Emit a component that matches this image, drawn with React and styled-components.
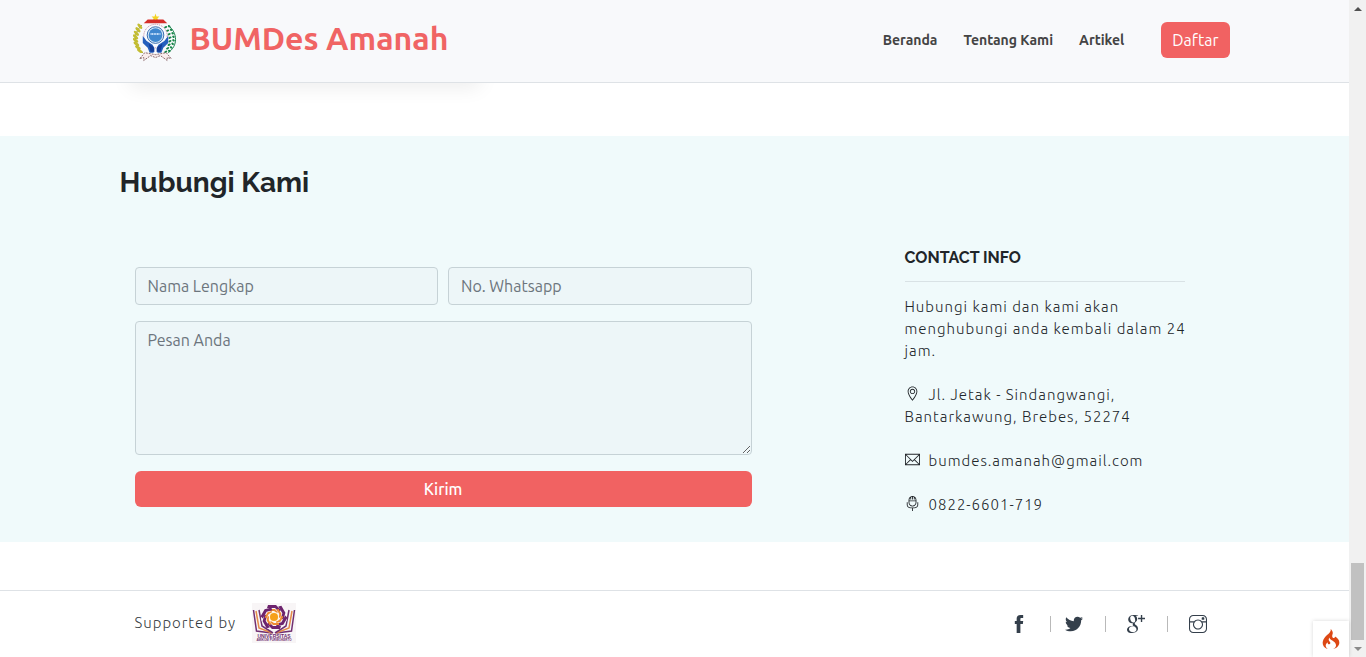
import React from "react";
import styled, { createGlobalStyle } from "styled-components";
import { TfiLocationPin, TfiEmail, TfiMicrophone, TfiFacebook, TfiTwitterAlt, TfiGoogle, TfiInstagram } from "react-icons/tfi";
import { SiCodeigniter } from "react-icons/si";

const GlobalStyle = createGlobalStyle`
  *, *::before, *::after { box-sizing: border-box; }
  body {
    margin: 0;
    background: #fff;
    color: #212529;
    font-family: Ubuntu, "Noto Sans", "Open Sans", sans-serif;
    font-size: 16px;
    line-height: 24px;
  }
`;

const Shell = styled.div`
  display: grid;
  grid-template-columns: minmax(0, 1fr) 17px;
  min-height: 100vh;
`;

const Page = styled.div`
  display: flex;
  flex-direction: column;
  position: relative;
`;

const Container = styled.div`
  width: 100%;
  max-width: 1140px;
  margin: 0 auto;
  padding: 0 15px;
`;

const Header = styled.header`
  position: relative;
  z-index: 1;
  background: #f8f9fb;
  border-bottom: 1px solid #dee2e6;
`;

const HeaderRow = styled(Container)`
  display: flex;
  align-items: center;
  justify-content: space-between;
  min-height: 82px;
  padding-bottom: 2px;
`;

const Brand = styled.a`
  display: flex;
  align-items: center;
  gap: 12px;
  padding: 0 0 4px 13px;
  color: #f06464;
  font-size: 32px;
  font-weight: 700;
  line-height: 50px;
  text-decoration: none;
`;

const Nav = styled.nav`
  display: flex;
  align-items: center;
  gap: 26px;
`;

const NavLink = styled.a`
  color: #444;
  font-size: 14px;
  font-weight: 700;
  text-decoration: none;
`;

const Button = styled.button`
  height: 36px;
  padding: 0 11px;
  border: 0;
  border-radius: 6px;
  background: #f16262;
  color: #fff;
  font-family: inherit;
  font-size: 16px;
  font-weight: ${(p) => (p.$strong ? 500 : 400)};
  width: ${(p) => (p.$block ? "100%" : "auto")};
  margin-left: ${(p) => (p.$block ? "0" : "11px")};
  cursor: pointer;
`;

const CardFoot = styled.div`
  height: 53px;

  &::before {
    content: "";
    position: absolute;
    top: 60px;
    width: 350px;
    height: 20px;
    margin-left: 10px;
    box-shadow: 0 7px 20px rgba(0, 0, 0, 0.08);
  }
`;

const Contact = styled.section`
  background: #f0fafb;
  padding: 29px 0 26px;
`;

const Title = styled.h2`
  margin: 0;
  font-family: Raleway, Lato, sans-serif;
  font-size: 28px;
  font-weight: 700;
  line-height: 36px;
`;

const Columns = styled.div`
  display: flex;
  justify-content: space-between;
  align-items: flex-start;
  padding: 46px 45px 0 15px;
`;

const Form = styled.form`
  display: grid;
  grid-template-columns: 1fr 1fr;
  gap: 16px 10px;
  flex: 0 1 617px;
  padding-top: 20px;
`;

const Field = styled.input`
  grid-column: ${(p) => (p.$wide ? "1 / -1" : "auto")};
  display: block;
  width: 100%;
  min-width: 0;
  padding: 6px 12px;
  border: 1px solid #c6d2d6;
  border-radius: 4px;
  background: #edf6f8;
  color: #495057;
  font-family: inherit;
  font-size: 16px;
  line-height: 24px;

  &::placeholder { color: #6c757d; opacity: 1; }
`;

const FullRow = styled.div`
  grid-column: 1 / -1;
`;

const Info = styled.aside`
  flex: 0 0 280px;
  font-size: 15px;
  font-weight: 300;
  letter-spacing: 1px;
  line-height: 22px;
  color: #212529;

  p { margin: 0 -8px 22px 0; }
  p:last-child { margin-bottom: 0; }
`;

const InfoTitle = styled.h3`
  margin: 0 0 14px;
  padding-bottom: 12px;
  border-bottom: 1px solid #d9e2e5;
  color: #212529;
  font-family: Raleway, Lato, sans-serif;
  font-size: 16px;
  font-weight: 700;
  letter-spacing: 0;
  line-height: 22px;
`;

const InfoIcon = styled.span`
  display: inline-block;
  width: 24px;
  svg { display: inline-block; width: 15px; height: 15px; vertical-align: -1px; }
`;

const PlainLink = styled.a`
  color: inherit;
  text-decoration: none;
`;

const Footer = styled.footer`
  margin-top: 48px;
  border-top: 1px solid #dee2e6;
`;

const FooterRow = styled(Container)`
  display: flex;
  justify-content: space-between;
  align-items: center;
  min-height: 66px;
`;

const Support = styled.div`
  display: flex;
  align-items: center;
  gap: 16px;
  padding: 0 0 2px 15px;
  font-size: 15px;
  font-weight: 300;
  letter-spacing: 1px;
  color: #343a40;
`;

const Social = styled.div`
  display: flex;
  align-items: center;
  padding-right: 1px;
`;

const SocialLink = styled.a`
  display: flex;
  align-items: center;
  height: 16px;
  padding: 0 22px 0 ${(p) => (p.$tight ? "14px" : "21px")};
  border-right: 1px solid #b9b9b9;
  color: #343f4b;

  &:last-child { border-right: 0; }
  svg { width: 18px; height: 18px; }
`;

const DebugBadge = styled.button`
  position: absolute;
  right: 0;
  bottom: 0;
  display: flex;
  align-items: center;
  justify-content: center;
  width: 36px;
  height: 36px;
  padding: 0;
  border: 0;
  background: #fff;
  box-shadow: 0 0 4px rgba(0, 0, 0, 0.16);
  color: #dd4814;
`;

const Scrollbar = styled.div`
  display: flex;
  flex-direction: column;
  align-items: center;
  justify-content: space-between;
  background: #f1f1f1;
`;

const Arrow = styled.span`
  width: 0;
  height: 0;
  margin: 7px 0 6px;
  border: 4px solid transparent;
  border-top-width: ${(p) => (p.$up ? "0" : "4px")};
  border-bottom-width: ${(p) => (p.$up ? "4px" : "0")};
  border-top-color: ${(p) => (p.$up ? "transparent" : "#8a8a8a")};
  border-bottom-color: ${(p) => (p.$up ? "#505050" : "transparent")};
`;

const Thumb = styled.span`
  width: 13px;
  height: 77px;
  margin-top: auto;
  background: #c1c1c1;
`;

const leaves = [0, 1, 2, 3, 4, 5, 6, 7];

function VillageLogo() {
  return (
    <svg width="45" height="50" viewBox="0 0 46 50" role="img" aria-label="Logo BUMDes Amanah">
      <path d="M23 0l1 3h3l-2 2 1 3-3-2-3 2 1-3-2-2h3z" fill="#f3d321" />
      <path d="M11 10l4-4h16l4 4z" fill="#d52e2a" />
      <path d="M9 12C0 20 0 33 10 40" fill="none" stroke="#777b23" strokeWidth="1" />
      <path d="M36 12c10 8 10 21 0 28" fill="none" stroke="#17804b" strokeWidth="1" />
      {leaves.map((i) => {
        const y = 13 + i * 3.6;
        const x = 7 - Math.sin((i / 7) * Math.PI) * 4.5;
        return (
          <g key={i}>
            <ellipse cx={x} cy={y} rx="3.3" ry="1.5" fill="#c3bd32" transform={`rotate(${50 - i * 3} ${x} ${y})`} />
            <ellipse cx={44 - x} cy={y} rx="1.4" ry="1.1" fill="#168447" transform={`rotate(35 ${44 - x} ${y})`} />
            <ellipse cx={40 - x} cy={y + 1} rx="1.7" ry="1" fill="#168447" transform={`rotate(-25 ${40 - x} ${y})`} />
          </g>
        );
      })}
      <circle cx="23" cy="23" r="12" fill="#f9fbff" stroke="#b97d98" strokeWidth="1" strokeDasharray="1 1" />
      <circle cx="23" cy="22" r="8.5" fill="#d9eaf7" stroke="#3669ad" strokeWidth="1" />
      <circle cx="23" cy="22" r="7" fill="#3f87cf" />
      <path d="M18 21h10" stroke="#d8eaff" strokeWidth="2" strokeDasharray="1 .6" />
      <path d="M10 23l4 5 6 4 2 4-1 4h-4l-2-5-5-5zM36 23l-4 5-6 4-2 4 1 4h4l2-5 5-5z" fill="#255fbd" />
      <path d="M16 31l5 3 1 5h-4zM30 31l-5 3-1 5h4z" fill="#153d96" />
      <path d="M7 46l5-6 11 2 11-2 5 6-4-1v3l-7-5-5 2-5-2-7 5v-3z" fill="#f9edee" stroke="#80595c" strokeWidth=".9" strokeDasharray="2 1" />
    </svg>
  );
}

function UniversityLogo() {
  return (
    <svg width="44" height="40" viewBox="0 0 44 40" role="img" aria-label="Universitas Amikom Purwokerto">
      <path fill="#f8f5f6" d="M0 0h44v40H0z" />
      <g fill="none" strokeWidth="1.5">
        <path d="M1.500 7l3 21 15 2M42.500 7l-3 21-15 2" stroke="#713072" />
        <path d="M4 8l3 17 13 5M40 8l-3 17-13 5" stroke="#e58b49" />
        <path d="M7 7l3 16 11 7M37 7l-3 16-11 7" stroke="#713072" />
      </g>
      <circle cx="22" cy="14" r="13" fill="#faf8f8" />
      {[0, 60, 120, 180, 240, 300].map((r) => (
        <g key={r} transform={`rotate(${r} 22 14)`}>
          <path d="M16 2h8l5 5-2 2-4-4h-8z" fill="#6d246e" />
          <path d="M17 6h6l3 3-1 1-3-2h-5z" fill="#ee8b32" />
        </g>
      ))}
      <circle cx="22" cy="14" r="5" fill="#fff3df" />
      <circle cx="22" cy="14" r="4" fill="#f6a01b" />
      <g fill="#713072" fontFamily="Liberation Sans, sans-serif" fontWeight="700" textAnchor="middle" letterSpacing="0">
        <text x="22" y="35" fontSize="5">UNIVERSITAS</text>
        <text x="22" y="38" fontSize="3">AMIKOM PURWOKERTO</text>
      </g>
    </svg>
  );
}

export default function App() {
  return (
    <>
      <GlobalStyle />
      <Shell>
        <Page>
          <Header>
            <HeaderRow>
              <Brand href="#"><VillageLogo />BUMDes Amanah</Brand>
              <Nav>
                <NavLink href="#beranda">Beranda</NavLink>
                <NavLink href="#tentang">Tentang Kami</NavLink>
                <NavLink href="#artikel">Artikel</NavLink>
                <Button type="button">Daftar</Button>
              </Nav>
            </HeaderRow>
          </Header>
          <Container><CardFoot /></Container>
          <Contact>
            <Container>
              <Title>Hubungi Kami</Title>
              <Columns>
                <Form onSubmit={(e) => e.preventDefault()}>
                  <Field type="text" aria-label="Nama Lengkap" placeholder="Nama Lengkap" />
                  <Field type="tel" aria-label="No. Whatsapp" placeholder="No. Whatsapp" />
                  <Field as="textarea" $wide rows={5} aria-label="Pesan Anda" placeholder="Pesan Anda" />
                  <FullRow><Button type="submit" $block $strong>Kirim</Button></FullRow>
                </Form>
                <Info>
                  <InfoTitle>CONTACT INFO</InfoTitle>
                  <p>Hubungi kami dan kami akan menghubungi anda kembali dalam 24 jam.</p>
                  <p><InfoIcon><TfiLocationPin /></InfoIcon>Jl. Jetak - Sindangwangi, Bantarkawung, Brebes, 52274</p>
                  <p><InfoIcon><TfiEmail /></InfoIcon><PlainLink href="mailto:bumdes.amanah@gmail.com">bumdes.amanah@gmail.com</PlainLink></p>
                  <p><InfoIcon><TfiMicrophone /></InfoIcon>0822-6601-719</p>
                </Info>
              </Columns>
            </Container>
          </Contact>
          <Footer>
            <FooterRow>
              <Support>Supported by <UniversityLogo /></Support>
              <Social>
                <SocialLink href="#facebook" aria-label="Facebook"><TfiFacebook /></SocialLink>
                <SocialLink $tight href="#twitter" aria-label="Twitter"><TfiTwitterAlt /></SocialLink>
                <SocialLink href="#google" aria-label="Google Plus"><TfiGoogle /></SocialLink>
                <SocialLink href="#instagram" aria-label="Instagram"><TfiInstagram /></SocialLink>
              </Social>
            </FooterRow>
          </Footer>
          <DebugBadge type="button" aria-label="Debug toolbar"><SiCodeigniter size={20} /></DebugBadge>
        </Page>
        <Scrollbar aria-hidden="true"><Arrow $up /><Thumb /><Arrow /></Scrollbar>
      </Shell>
    </>
  );
}
